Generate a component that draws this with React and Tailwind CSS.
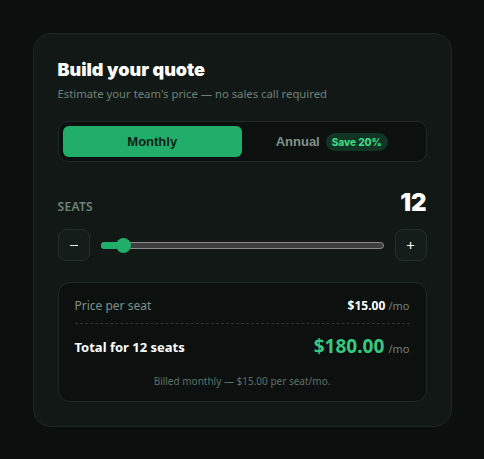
import React from "react";

const sans = { fontFamily: '"Noto Sans", "Open Sans", sans-serif' };
const heavy = { fontFamily: 'Inter, "Noto Sans", sans-serif' };

function StepButton({ children }) {
  return (
    <button className="flex h-8 w-8 shrink-0 items-center justify-center rounded-lg border border-[#233029] bg-[#141d19] text-[15px] text-white">
      {children}
    </button>
  );
}

export default function App() {
  const seats = 12;
  const price = 15;

  return (
    <div
      className="flex min-h-[459px] w-full justify-center bg-[#0b0f0e] pt-[33px]"
      style={sans}
    >
      <div className="h-fit w-[419px] rounded-[18px] border border-[#1d2823] bg-[#111815] px-6 pb-6 pt-6">
        <h2
          className="text-[18px] font-black leading-6 text-white"
          style={heavy}
        >
          Build your quote
        </h2>
        <p className="mt-1 text-[11.3px] leading-4 text-[#6e8179]">
          Estimate your team's price — no sales call required
        </p>

        {/* billing toggle */}
        <div className="mt-[19px] grid grid-cols-2 rounded-[10px] border border-[#1f2a25] bg-[#0c110f] p-1">
          <button
            className="flex h-[31px] items-center justify-center rounded-md bg-[#20ae6a] text-[13px] font-bold text-[#0a1f14]"
            style={{ fontFamily: '"Liberation Sans", Arial, sans-serif' }}
          >
            Monthly
          </button>
          <button className="flex h-[31px] items-center justify-center gap-1.5">
            <span
              className="text-[13px] font-bold text-[#80918a]"
              style={{ fontFamily: '"Liberation Sans", Arial, sans-serif' }}
            >
              Annual
            </span>
            <span
              className="rounded-full bg-[#123424] px-1.5 py-[3px] text-[10px] font-extrabold leading-3 text-[#3ddc84]"
              style={heavy}
            >
              Save 20%
            </span>
          </button>
        </div>

        {/* seats */}
        <div className="mt-[27px] flex items-baseline justify-between">
          <span className="text-[12px] font-semibold uppercase tracking-wide text-[#6f8279]">
            Seats
          </span>
          <span
            className="text-[24px] font-black leading-7 text-white"
            style={heavy}
          >
            {seats}
          </span>
        </div>

        <div className="mt-3 flex items-center gap-[11px]">
          <StepButton>
            <span className="block h-px w-2 bg-white" />
          </StepButton>
          <div className="relative flex-1">
            <div className="h-[7px] w-full rounded-full border border-[#8c8c8c] bg-[#3e3e3e]" />
            <div className="absolute left-0 top-0 h-[7px] w-[23px] rounded-l-full bg-[#20ae6a]" />
            <div className="absolute left-[15px] top-[-4px] h-[15px] w-[15px] rounded-full bg-[#20ae6a]" />
          </div>
          <StepButton>+</StepButton>
        </div>

        {/* summary */}
        <div className="mt-[21px] rounded-xl border border-[#1f2a25] bg-[#0c1110] px-4 pb-3 pt-3.5">
          <div className="flex items-center justify-between pb-2">
            <span className="text-[12px] leading-[18px] text-[#7d8f87]">
              Price per seat
            </span>
            <span className="text-[12px] leading-[18px]">
              <span className="font-bold text-white">${price.toFixed(2)}</span>{" "}
              <span className="text-[11px] text-[#6e8179]">/mo</span>
            </span>
          </div>
          <div className="border-t border-dashed border-[#2a3530]" />
          <div className="mt-2 flex items-center justify-between">
            <span className="text-[13px] font-bold text-white">
              Total for {seats} seats
            </span>
            <span className="leading-7">
              <span className="text-[19px] font-bold text-[#36c97e]">
                ${(price * seats).toFixed(2)}
              </span>{" "}
              <span className="text-[11px] text-[#6e8179]">/mo</span>
            </span>
          </div>
          <p className="mt-2.5 text-center text-[10px] leading-4 text-[#5d6f67]">
            Billed monthly — ${price.toFixed(2)} per seat/mo.
          </p>
        </div>
      </div>
    </div>
  );
}
